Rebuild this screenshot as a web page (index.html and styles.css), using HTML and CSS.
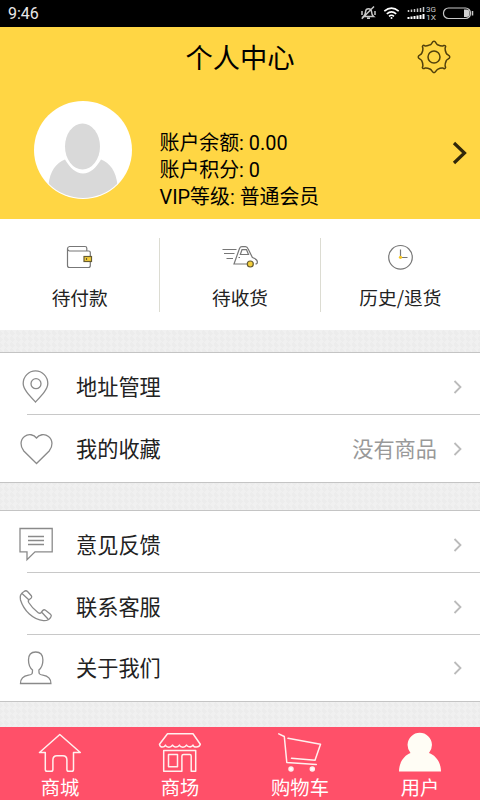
FILE: index.html
```html
<!DOCTYPE html>
<html lang="zh-CN">
<head>
<meta charset="utf-8">
<title>个人中心</title>
<link rel="stylesheet" href="styles.css">
</head>
<body>
<div class="app">
  <div class="status">
    <span class="time">9:46</span>
    <svg class="status-icons" width="120" height="27" viewBox="360 0 120 27" fill="none" stroke="#c8c8c8">
      <path d="M363.500 16.500c2-1.500 2-3 2.200-5.500.3-3 5.300-3 5.700 0 .2 2.500.3 4 2.200 5.500zM367 18.300h3M362 11v4M375 11v4M361.800 18.800 374 6.500" stroke-width="1.500"/>
      <path d="M384.300 11.200q7.200-6 14.400 0M386.800 13.800q4.700-4 9.400 0M389 16.300q2.500-2 5 0" stroke="#fff" stroke-width="1.600"/>
      <circle cx="391.500" cy="18" r="1" fill="#fff" stroke="none"/>
      <path d="M408.500 12v-2M411.500 12V9.500M414.500 12V9M417.500 12V8.500M420.500 12V8M423.500 12V7" stroke-width="1.500"/>
      <path d="M408.500 19v-2M411.500 19v-2.500M414.500 19v-3M417.500 19v-3.500M420.500 19v-4M423.500 19v-5" stroke="#fff" stroke-width="2"/>
      <text class="net" x="426" y="12.300" textLength="10" lengthAdjust="spacingAndGlyphs">3G</text>
      <text class="net" x="426" y="19.500" textLength="10" lengthAdjust="spacingAndGlyphs">1X</text>
      <rect x="443.500" y="8" width="27" height="10.500" rx="5" stroke-width="1.200"/>
      <path d="M464 9.500h2.500a3 3 0 0 1 3 3v1.500a3 3 0 0 1-3 3H464z" fill="#d0d0d0" stroke="none"/>
      <path d="M472.500 11v4.500" stroke-width="1.500"/>
    </svg>
  </div>

  <header class="header">
    <div class="titlebar">
      <h1>个人中心</h1>
      <svg class="gear" width="34" height="34" viewBox="-17 -17 34 34" fill="none" stroke="#51400c" stroke-width="1.500">
        <circle r="6"/>
        <path stroke-linejoin="round" d="M-3.600-12.300C-2-13-2-15.700 0-15.700S2-13 3.600-12.300 7.300-10.900 8.700-11.100 10.300-12.200 11.300-11.200 11.200-10 11.100-8.700 11.500-5.200 12.300-3.600 15.800-2 15.800 0 13 2 12.300 3.600 10.900 7.300 11.100 8.700 12.200 10.300 11.200 11.300 10 11.200 8.700 11.100 5.200 11.500 3.600 12.300 2 15.700 0 15.700-2 13-3.600 12.300-7.300 10.900-8.700 11.100-10.300 12.200-11.300 11.200-11.200 10-11.100 8.700-11.500 5.200-12.300 3.600-15.800 2-15.800 0-13-2-12.300-3.600-10.900-7.300-11.100-8.700-12.200-10.300-11.200-11.300-10-11.200-8.700-11.100-5.200-11.500-3.600-12.300Z"/>
      </svg>
    </div>
    <div class="profile">
      <svg class="avatar" width="98" height="98" viewBox="0 0 98 98">
        <defs><clipPath id="round"><circle cx="49" cy="49" r="48"/></clipPath></defs>
        <circle cx="49" cy="49" r="49" fill="#fff"/>
        <g fill="#d9d9d9" clip-path="url(#round)">
          <path d="M14.500 98V84C16 70 22 62 31 58.500 36 67 42 72.500 49 72.500S62 67 67 58.500C76 62 82 70 83.500 84V98z"/>
          <ellipse cx="48.500" cy="45.500" rx="17.500" ry="23"/>
        </g>
      </svg>
      <div class="account">
        <p>账户余额: 0.00</p>
        <p>账户积分: 0</p>
        <p>VIP等级: 普通会员</p>
      </div>
      <svg class="more" width="16" height="24" viewBox="0 0 16 24" fill="none" stroke="#30270a" stroke-width="3.200"><path d="m2 2 10.500 10L2 22"/></svg>
    </div>
  </header>

  <nav class="orders">
    <div class="order">
      <svg width="40" height="28" viewBox="60 243 40 28" fill="none" stroke="#777" stroke-width="1.200">
        <path d="M90.300 256v-3.500q0-1.500-1.500-1.500H69.500q-2-.3-2-2.200t2-2.300h15.500q1.800 0 1.800 1.800V251M67.500 248.500v17q0 2 2 2h19q1.800 0 1.800-2V262"/>
        <rect x="84" y="256.500" width="7.500" height="5" fill="#f5cf3b" stroke="#665c32"/>
        <path d="M86.500 258v2" stroke="#665c32"/>
      </svg>
      <span>待付款</span>
    </div>
    <div class="order">
      <svg width="40" height="28" viewBox="220 243 40 28" fill="none" stroke="#777" stroke-width="1.200">
        <path d="M222.500 249.500h14M224 253.500h10.500M226.500 258.500h6.500M247 264H234l5.500-15.500q.7-1.800 2.500-1.800h3.500q1.700 0 2.700 2.200l4.200 8.600q5 2 5 4.500 0 2-2 2M240.300 254.500l1.700-4.800h4.500l2 4.800zM238.500 257.500h1.500"/>
        <circle cx="250.300" cy="264" r="3" fill="#f5cf3b" stroke="#665c32"/>
      </svg>
      <span>待收货</span>
    </div>
    <div class="order">
      <svg width="40" height="28" viewBox="380 243 40 28" fill="none" stroke="#777" stroke-width="1.200">
        <circle cx="400.500" cy="257.300" r="11.800"/><path d="M400.500 249.500v8h7"/><circle cx="400.500" cy="257.300" r="1.600" fill="#f7c51e" stroke="none"/>
      </svg>
      <span>历史/退货</span>
    </div>
  </nav>

  <section class="card">
    <div class="row">
      <svg class="icon" width="40" height="40" viewBox="16 367 40 40"><path d="M35.500 402C29 395 23.200 389 23.200 383.500a12.300 12.600 0 0 1 24.600 0C47.800 389 42 395 35.500 402z"/><circle cx="36" cy="383.700" r="5"/></svg>
      <span class="label">地址管理</span>
      <svg class="chev" width="10" height="14" viewBox="0 0 10 14"><path d="m1.500 1 6 6-6 6"/></svg>
    </div>
    <div class="row last">
      <svg class="icon" width="40" height="40" viewBox="16 428 40 40"><path d="M36.500 462.500 23.800 450C20 445.500 20 439 24.500 435.500c4-3.200 9.500-2 12 1.500 2.500-3.500 8-4.700 12-1.500 4.500 3.500 4.500 10 .7 14.500z"/></svg>
      <span class="label">我的收藏</span>
      <span class="value">没有商品</span>
      <svg class="chev" width="10" height="14" viewBox="0 0 10 14"><path d="m1.500 1 6 6-6 6"/></svg>
    </div>
  </section>

  <section class="card">
    <div class="row">
      <svg class="icon" width="40" height="40" viewBox="16 525 40 40"><path d="M20 528.500h32.200v23.300H35l-8 8v-8h-7zM28 536.500h16M28 540.500h16M28 544.500h16"/></svg>
      <span class="label">意见反馈</span>
      <svg class="chev" width="10" height="14" viewBox="0 0 10 14"><path d="m1.500 1 6 6-6 6"/></svg>
    </div>
    <div class="row">
      <svg class="icon" width="40" height="40" viewBox="16 587 40 40"><path d="M24 591.500C20.500 593.500 19.500 596 20.500 600c3.500 11 12.500 19.500 23 20.700 3.500.2 6-1 7.500-4q.8-1.500-.5-2.500l-5-4q-1.500-1-2.800.3l-1.500 2q-1.200 1.500-3 .2c-4-3-7-6-9.500-10.200q-1-2 .6-3l1.700-1.200q1.300-1.100.3-2.600l-3.800-4.200q-1.500-1.500-3.500 0zM22 593.500l6.500 6M41.500 612l6.500 7"/></svg>
      <span class="label">联系客服</span>
      <svg class="chev" width="10" height="14" viewBox="0 0 10 14"><path d="m1.500 1 6 6-6 6"/></svg>
    </div>
    <div class="row last short">
      <svg class="icon" width="40" height="40" viewBox="16 648 40 40"><path d="M20.500 683.500c0-5 3-7.500 8-8.300 4-.6 4-1.500 4-5.200-3-2.500-4-6.500-4-10 0-5.200 3-8 7.200-8s7.200 2.800 7.200 8c0 3.500-1 7.500-4 10 0 3.700 0 4.600 4 5.200 5 .8 8 3.300 8 8.300z"/></svg>
      <span class="label">关于我们</span>
      <svg class="chev" width="10" height="14" viewBox="0 0 10 14"><path d="m1.500 1 6 6-6 6"/></svg>
    </div>
  </section>

  <nav class="tabs">
    <div class="tab">
      <svg width="48" height="44" viewBox="36 730 48 44"><path d="M59.800 734.500 39.500 752.500h5.800v17q0 1.800 1.800 1.800h4q1.800 0 1.800-1.800v-9.500q0-4.300 4-4.300h6q4 0 4 4.300v9.500q0 1.800 1.800 1.800h3q1.800 0 1.800-1.800v-17h6.800z"/></svg>
      <span>商城</span>
    </div>
    <div class="tab">
      <svg width="48" height="44" viewBox="156 730 48 44"><path d="M167.500 733.800h25.500l7.300 10.500q-1 3-4.300 2.800-2.500 0-3-2-1.500 2.500-4.500 1.500-1.500-.5-2-1.500-1.500 2.500-4.500 2-2-.3-2.500-2-2 2.500-4.500 1.800-2-.3-2.500-1.800-1.500 2.500-4.500 2-2-.3-2.500-2-1 2-3 2-2.500 0-3-2.800zM163.700 750.500h32v20.700h-4.500V756q0-1.500-1.500-1.500h-6q-1.800 0-1.800 1.500v15.200h-18.200zM168.500 754.500h9v12.200h-9z"/></svg>
      <span>商场</span>
    </div>
    <div class="tab">
      <svg width="48" height="44" viewBox="276 730 48 44"><path d="m278.800 733.800 5.500 2.700 2.500 26 29.500 2M288 738.300l32.500 6-5.500 15.900-23.500-2"/><circle cx="291" cy="769" r="2" fill="#fff"/><circle cx="312.300" cy="769" r="2" fill="#fff"/></svg>
      <span>购物车</span>
    </div>
    <div class="tab">
      <svg width="48" height="44" viewBox="396 730 48 44"><path class="solid" d="M399 771.500c0-9 5-16 11.500-18.500a12.200 12.200 0 1 1 18.500 0c7 2.500 12 9.500 12 18.500z"/></svg>
      <span>用户</span>
    </div>
  </nav>
</div>
</body>
</html>
```
FILE: styles.css
```css
* { box-sizing: border-box; }
body { margin: 0; font-family: "Noto Sans CJK SC", sans-serif; color: #222; }
h1, p { margin: 0; font-weight: 400; }
svg { display: block; flex: none; }

.app {
  width: 480px;
  height: 800px;
  display: flex;
  flex-direction: column;
  overflow: hidden;
  background: repeating-conic-gradient(from 45deg, #ececec 0 25%, #f0f0f0 0 50%) 0 0 / 6px 6px;
}

.status {
  height: 27px;
  display: flex;
  justify-content: space-between;
  align-items: center;
  background: #000;
  color: #e8e8e8;
}
.time { padding-left: 8px; font: 16px Roboto, sans-serif; }
.net { font: 7px Roboto, sans-serif; fill: #ccc; stroke: none; }

.header { height: 192px; background: #ffd644; color: #000; }
.titlebar {
  height: 60px;
  display: grid;
  grid-template-columns: 1fr auto 1fr;
  align-items: center;
}
.titlebar h1 { grid-column: 2; font-size: 27.300px; line-height: 58px; padding-bottom: 2px; }
.gear { justify-self: end; margin-right: 29px; }
.profile { display: flex; padding: 14px 12px 0 34px; }
.account { margin: 29px auto 0 27.500px; font-family: Roboto, "Noto Sans CJK SC", sans-serif; font-size: 19.900px; line-height: 27px; white-space: nowrap; }
.more { margin-top: 40px; }

.orders { height: 111px; padding-top: 19px; display: flex; background: #fff; }
.order {
  flex: 1;
  height: 74px;
  padding-top: 5px;
  display: flex;
  flex-direction: column;
  align-items: center;
  border-right: 1px solid #dcdcd2;
  font-size: 18.700px;
}
.order:last-child { border-right: 0; }
.order span { line-height: 30px; margin-top: 11px; }

.card { margin-top: 22px; background: #fff; border-top: 1px solid #c4c4c4; border-bottom: 1px solid #c4c4c4; }
.card + .card { margin-top: 27px; }
.row {
  height: 62px;
  margin-left: 27px;
  padding: 7px 17px 0 0;
  display: flex;
  align-items: center;
  border-bottom: 1px solid #c8c8c8;
}
.row.last { height: 67px; padding-top: 0; border-bottom: 0; }
.row.short { height: 66px; }
.icon { margin-left: -11px; fill: none; stroke: #8a8a8a; stroke-width: 1.300; }
.label { margin: 0 auto 0 20px; padding-bottom: 2px; font-size: 21.200px; line-height: 30px; }
.value { margin-right: 16px; padding-bottom: 2px; color: #999; font-size: 21.200px; line-height: 30px; }
.chev { fill: none; stroke: #bbb; stroke-width: 1.800; }

.tabs { height: 73px; margin-top: auto; display: flex; background: #ff5069; color: #fff; }
.tab { flex: 1; padding-top: 3px; display: flex; flex-direction: column; align-items: center; font-size: 19.300px; }
.tab svg { fill: none; stroke: #fff0ee; stroke-width: 1.500; stroke-linejoin: round; stroke-linecap: round; }
.tab .solid { fill: #fffdf5; stroke: none; }
.tab span { line-height: 26px; }
```
